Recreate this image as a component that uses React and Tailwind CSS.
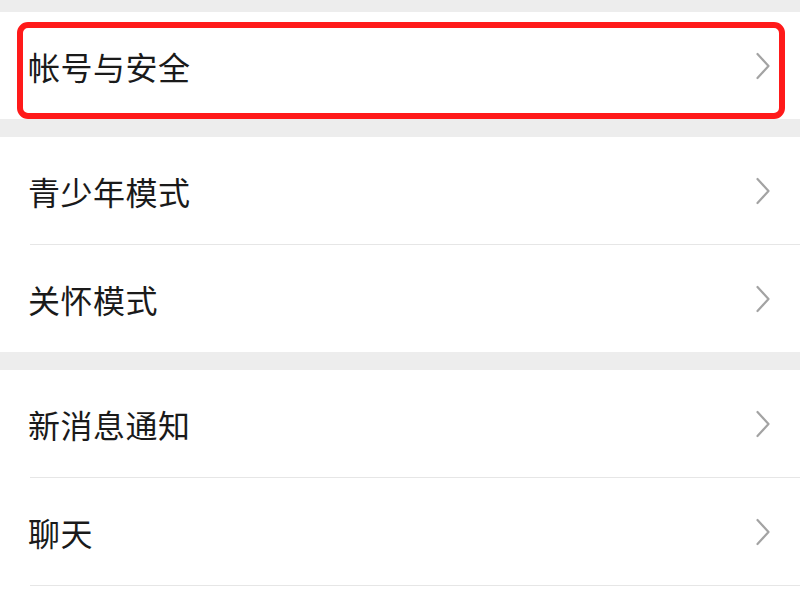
import React from 'react'

const font = { fontFamily: '"Noto Sans CJK SC", "Noto Sans", sans-serif' }

function Chevron() {
  return (
    <svg width="16" height="28" viewBox="0 0 16 28" className="shrink-0">
      <path d="M2.5 2 L13.5 14 L2.5 26" fill="none" stroke="#a3a3a3" strokeWidth="2.2" strokeLinecap="round" strokeLinejoin="round" />
    </svg>
  )
}

function Row({ label, divider, highlight }) {
  return (
    <div className="relative bg-white">
      <div className="h-[107px] flex items-center justify-between pl-[28px] pr-[29px]">
        <span className="text-[32px] leading-none text-[#1a1a1a] tracking-[0.5px]">{label}</span>
        <Chevron />
      </div>
      {divider && <div className="ml-[30px] h-px bg-[#e6e6e6]" />}
      {highlight && (
        <div className="absolute left-[17px] top-[10px] w-[768px] h-[97px] rounded-[11px] border-[6px] border-[#ff1a1a]" />
      )}
    </div>
  )
}

export default function App() {
  return (
    <div className="w-[800px] h-[600px] overflow-hidden bg-[#ededed]" style={font}>
      <div className="h-[12px]" />
      <Row label="帐号与安全" highlight />
      <div className="h-[18px]" />
      <Row label="青少年模式" divider />
      <Row label="关怀模式" />
      <div className="h-[18px]" />
      <Row label="新消息通知" divider />
      <Row label="聊天" divider />
      {/* next row starts below the fold */}
      <div className="h-[40px] bg-white" />
    </div>
  )
}
